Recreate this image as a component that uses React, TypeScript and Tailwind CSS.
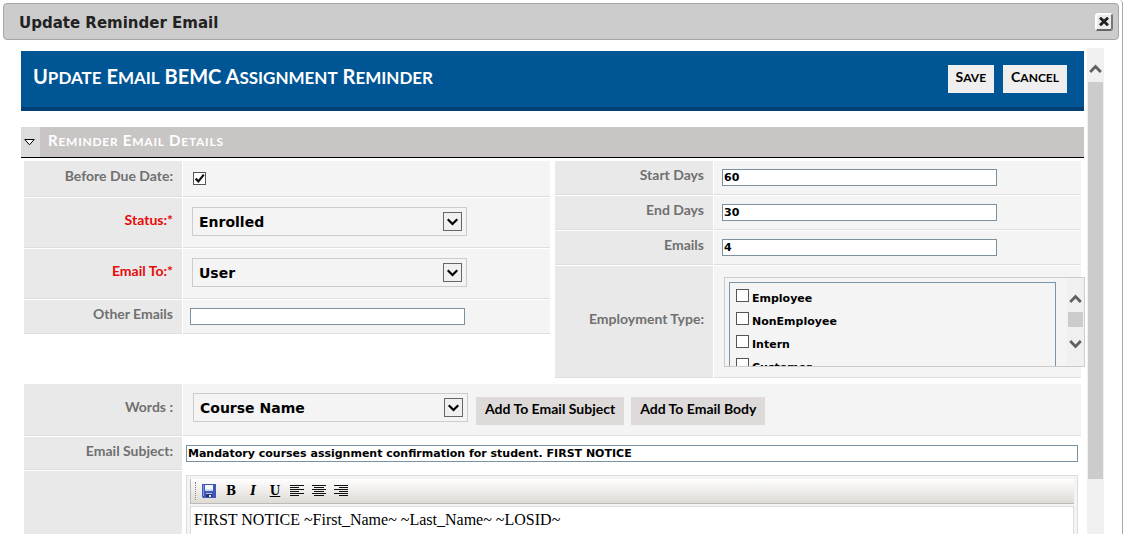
import { ReactNode } from "react";
import clsx from "clsx";

const employmentTypes = ["Employee", "NonEmployee", "Intern", "Customer"];

// Capitals are drawn large, the other letters as smaller capitals
function SmallCaps({ text, small }: { text: string; small: string }) {
  return (
    <>
      {text.split(/([a-z]+)/).map((part, i) =>
        /^[a-z]/.test(part) ? (
          <span key={i} className={clsx("uppercase", small)}>
            {part}
          </span>
        ) : (
          part
        )
      )}
    </>
  );
}

interface RowProps {
  label?: string;
  htmlFor?: string;
  required?: boolean;
  plain?: boolean;
  className?: string;
  children: ReactNode;
}

function Row({ label, htmlFor, required, plain, className, children }: RowProps) {
  return (
    <div className="flex gap-px">
      <div className="flex w-[158px] shrink-0 items-center justify-end border-b border-[#dedede] bg-[#e9e9e9] pr-[9px] pb-[5px]">
        {label && (
          <label
            htmlFor={htmlFor}
            className={clsx(
              "text-sm leading-5 font-bold whitespace-nowrap",
              required ? "text-[#e60a0a]" : "text-[#707070]"
            )}
          >
            {label}
          </label>
        )}
      </div>
      <div
        className={clsx(
          "flex min-w-0 flex-1 items-start",
          !plain && "border-b border-[#dedede] bg-[#f4f4f4]",
          className
        )}
      >
        {children}
      </div>
    </div>
  );
}

function TextBox({ id, value = "", wide }: { id: string; value?: string; wide?: boolean }) {
  return (
    <input
      id={id}
      type="text"
      defaultValue={value}
      className={clsx(
        "h-[17px] border border-[#7b919f] bg-white px-px font-['DejaVu_Sans',sans-serif] text-[11px] font-bold text-black",
        wide ? "w-full" : "w-[275px]"
      )}
    />
  );
}

function DropDown({ id, options }: { id: string; options: string[] }) {
  return (
    <div className="relative w-[275px]">
      <select
        id={id}
        className="block h-[29px] w-full appearance-none border border-[#cccccc] bg-[#f4f4f4] pr-8 pl-1.5 font-['DejaVu_Sans',sans-serif] text-sm font-bold text-black"
      >
        {options.map((option) => (
          <option key={option}>{option}</option>
        ))}
      </select>
      <span className="pointer-events-none absolute top-[5px] right-[5px] flex size-[19px] items-center justify-center border border-[#666] bg-[#f0f0f0]">
        <svg width="11" height="8" viewBox="0 0 11 8" fill="none" stroke="#000" strokeWidth="2.2">
          <path d="M0.7 1.2 5.5 6 10.3 1.2" />
        </svg>
      </span>
    </div>
  );
}

function CheckBox({ id, checked }: { id: string; checked?: boolean }) {
  return (
    <span className="grid size-[13px] shrink-0">
      <input
        id={id}
        type="checkbox"
        defaultChecked={checked}
        className="peer col-start-1 row-start-1 size-[13px] appearance-none border border-[#555] bg-white"
      />
      <svg
        viewBox="0 0 13 13"
        fill="none"
        stroke="#111"
        strokeWidth="2.2"
        className="pointer-events-none invisible col-start-1 row-start-1 size-[13px] peer-checked:visible"
      >
        <path d="M2.6 6.6 5.4 9.4 10.8 2.6" />
      </svg>
    </span>
  );
}

function Chevron({ down }: { down?: boolean }) {
  return (
    <svg width="13" height="10" viewBox="0 0 13 10" fill="none" stroke="#606060" strokeWidth="2.8">
      <path d={down ? "M1.2 2 6.5 7.4 11.8 2" : "M1.2 8 6.5 2.6 11.8 8"} />
    </svg>
  );
}

function AlignIcon({ lines }: { lines: [number, number][] }) {
  return (
    <svg width="14" height="12" viewBox="0 0 14 12" fill="#111" shapeRendering="crispEdges">
      {lines.map(([x, width], i) => (
        <rect key={i} x={x} y={i * 2} width={width} height="1" />
      ))}
    </svg>
  );
}

function SaveIcon() {
  return (
    <svg width="14" height="14" viewBox="0 0 14 14">
      <path d="M0 0h14v14H1L0 13z" fill="#3d59b5" />
      <path d="M1 1h1v11H1z" fill="#7f97dc" />
      <path d="M3 1h8v6H3z" fill="#cfdcf5" />
      <path d="M3 1h8v4H3z" fill="#f4f8fe" />
      <path d="M4 9h6v4H4z" fill="#26346e" />
      <path d="M7 11h2v2H7z" fill="#e6e9f2" />
      <path d="M4 9h6v1H4z" fill="#b9c4e2" />
    </svg>
  );
}

function ToolButton({ title, children }: { title: string; children: ReactNode }) {
  return (
    <button
      type="button"
      aria-label={title}
      className="flex h-6 w-[22px] items-center justify-center font-['DejaVu_Serif',serif] text-xs font-bold text-black"
    >
      {children}
    </button>
  );
}

export default function App() {
  return (
    <div className="flex h-screen flex-col overflow-hidden rounded-tr border-r border-[#aaaaaa] bg-white pt-[3px] font-[Lato,sans-serif]">
      {/* Dialog title */}
      <div className="mx-[3px] flex h-[37px] shrink-0 items-center justify-between rounded border border-[#a6a6a6] bg-[#cccccc] pr-[5px] pl-[15px]">
        <h1 className="pt-[3px] font-['DejaVu_Sans',sans-serif] text-[15px] font-bold text-[#222]">
          Update Reminder Email
        </h1>
        <button
          type="button"
          aria-label="Close"
          className="flex size-[18px] items-center justify-center rounded-[3px] border-2 border-t-white border-r-[#777] border-b-[#666] border-l-white bg-[#ececec]"
        >
          <svg width="10" height="9" viewBox="0 0 10 9" stroke="#222" strokeWidth="2.8">
            <path d="M1 0.7 9 8.3M9 0.7 1 8.3" />
          </svg>
        </button>
      </div>

      <div className="mt-2 flex min-h-0 flex-1 gap-[3px] pr-[18px] pl-[21px]">
        <main className="-mr-px min-w-0 flex-1 overflow-hidden pt-[3px] pr-px">
          <header className="flex h-[60px] items-start justify-between border-b-4 border-[#013f75] bg-[#005595] pt-3.5 pr-[17px] pl-3">
            <h2 className="text-xl leading-[22px] font-bold text-white">
              <SmallCaps text="Update Email BEMC Assignment Reminder" small="text-[17px]" />
            </h2>
            <div className="flex gap-[9px]">
              {["Save", "Cancel"].map((name) => (
                <button
                  key={name}
                  type="button"
                  className="h-7 bg-[#efefef] px-2 pb-1 text-sm leading-6 font-bold text-black"
                >
                  <SmallCaps text={name} small="text-xs" />
                </button>
              ))}
            </div>
          </header>

          {/* Section bar */}
          <div className="mt-4 flex h-[31px] border-b border-black bg-[#c9c5c4]">
            <button
              type="button"
              aria-label="Collapse section"
              className="flex w-[19px] items-center justify-center bg-[#dcdcdc] pr-0.5"
            >
              <svg width="11" height="7" viewBox="0 0 11 7" fill="#fff" stroke="#000">
                <path d="M0.8 0.5h9.4L5.5 5.8z" />
              </svg>
            </button>
            <h3 className="pl-2 text-[15px] leading-[26px] font-bold tracking-wider text-white">
              <SmallCaps text="Reminder Email Details" small="text-xs" />
            </h3>
          </div>

          <form className="mt-[3px] pr-[3px] pl-[3px]">
            <div className="flex items-start gap-[5px]">
              <div className="flex min-w-0 flex-1 flex-col gap-px">
                <Row label="Before Due Date:" htmlFor="before" className="py-[11px] pl-2.5">
                  <CheckBox id="before" checked />
                </Row>
                <Row label="Status:*" htmlFor="status" required className="pt-[9px] pb-[11px] pl-[9px]">
                  <DropDown id="status" options={["Enrolled"]} />
                </Row>
                <Row label="Email To:*" htmlFor="to" required className="pt-[9px] pb-[11px] pl-[9px]">
                  <DropDown id="to" options={["User"]} />
                </Row>
                <Row label="Other Emails" htmlFor="other" className="py-2 pl-[7px]">
                  <TextBox id="other" />
                </Row>
              </div>

              <div className="flex min-w-0 flex-1 flex-col gap-px">
                <Row label="Start Days" htmlFor="start" className="py-2 pl-2">
                  <TextBox id="start" value="60" />
                </Row>
                <Row label="End Days" htmlFor="end" className="py-2 pl-2">
                  <TextBox id="end" value="30" />
                </Row>
                <Row label="Emails" htmlFor="emails" className="py-2 pl-2">
                  <TextBox id="emails" value="4" />
                </Row>
                <Row label="Employment Type:" htmlFor="Employee" className="pt-[11px] pb-2.5 pl-2.5">
                  <div className="-mr-1 flex h-[90px] flex-1 overflow-hidden border border-[#cccccc] bg-[#f4f4f4]">
                    <div className="mt-1 mr-[11px] ml-1 h-28 flex-1 border border-[#7b94a6] px-1.5 pt-1.5">
                      {employmentTypes.map((type) => (
                        <div key={type} className="flex h-[23px] items-start gap-[3px]">
                          <CheckBox id={type} />
                          <label
                            htmlFor={type}
                            className="pt-[3px] font-['DejaVu_Sans',sans-serif] text-[11px] leading-[14px] font-bold text-black"
                          >
                            {type}
                          </label>
                        </div>
                      ))}
                    </div>
                    <div className="flex w-[17px] flex-col items-center bg-[#f0f0f0] pt-4">
                      <Chevron />
                      <div className="mt-2 mb-3 h-[15px] w-[15px] bg-[#cccccc]" />
                      <Chevron down />
                    </div>
                  </div>
                </Row>
              </div>
            </div>

            <div className="mt-1.5 flex flex-col gap-px">
              <Row label="Words :" htmlFor="words" className="gap-2 pt-[9px] pb-2.5 pl-2.5">
                <DropDown id="words" options={["Course Name"]} />
                <div className="flex gap-[7px] pt-1">
                  {["Add To Email Subject", "Add To Email Body"].map((name) => (
                    <button
                      key={name}
                      type="button"
                      className="h-7 bg-[#dddad9] px-[9px] pb-1 text-sm leading-6 font-bold whitespace-nowrap text-black"
                    >
                      {name}
                    </button>
                  ))}
                </div>
              </Row>
              <Row label="Email Subject:" htmlFor="subject" plain className="pt-2 pr-[3px] pb-2 pl-[3px]">
                <TextBox
                  id="subject"
                  value="Mandatory courses assignment confirmation for student. FIRST NOTICE"
                  wide
                />
              </Row>
              <Row plain className="pt-1 pr-[3px] pl-[3px]">
                <div className="w-full border border-[#dddddd] bg-[#f4f4f4] px-[3px] pt-[3px]">
                  <div className="flex h-[25px] items-center border-b border-l border-[#bbbbbb] bg-linear-to-b from-white to-[#dedbd5] pl-1">
                    <span className="mr-0.5 h-[18px] border-l border-dotted border-[#888]" />
                    <ToolButton title="Save">
                      <SaveIcon />
                    </ToolButton>
                    <ToolButton title="Bold">B</ToolButton>
                    <ToolButton title="Italic">
                      <span className="italic">I</span>
                    </ToolButton>
                    <ToolButton title="Underline">
                      <span className="underline">U</span>
                    </ToolButton>
                    <ToolButton title="Align left">
                      <AlignIcon lines={[[0, 14], [0, 9], [0, 14], [0, 9], [0, 14], [0, 9]]} />
                    </ToolButton>
                    <ToolButton title="Align center">
                      <AlignIcon lines={[[0, 14], [2, 10], [0, 14], [2, 10], [0, 14], [2, 10]]} />
                    </ToolButton>
                    <ToolButton title="Align right">
                      <AlignIcon lines={[[0, 14], [5, 9], [0, 14], [5, 9], [0, 14], [5, 9]]} />
                    </ToolButton>
                  </div>
                  <textarea
                    aria-label="Email body"
                    defaultValue="FIRST NOTICE ~First_Name~ ~Last_Name~ ~LOSID~"
                    className="mt-0.5 block h-40 w-full resize-none border border-[#dddddd] bg-white px-[3px] pt-[3px] font-['Liberation_Serif',serif] text-base leading-5 text-black"
                  />
                </div>
              </Row>
            </div>
          </form>
        </main>

        {/* Page scroll bar */}
        <div className="flex w-[17px] shrink-0 flex-col items-center bg-[#f0f0f0] pt-4">
          <Chevron />
          <div className="mt-2 h-[397px] w-[15px] bg-[#cccccc]" />
        </div>
      </div>
    </div>
  );
}
